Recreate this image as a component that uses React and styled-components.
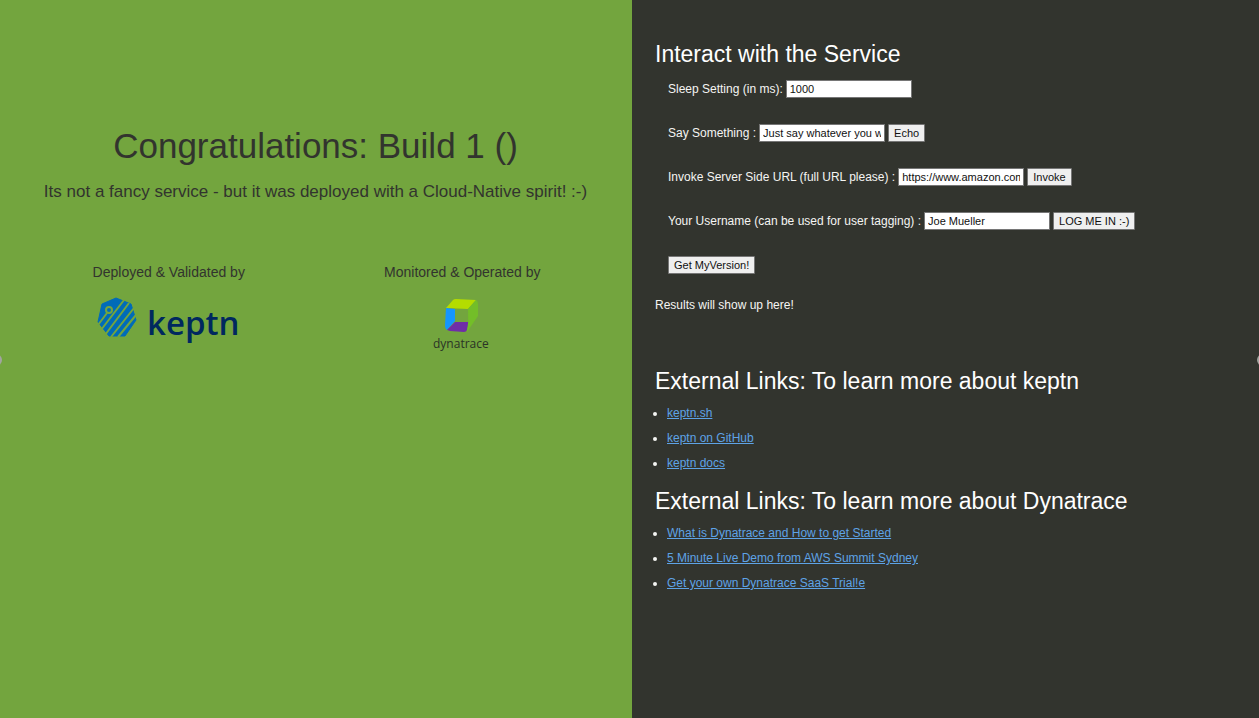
import React from "react";
import styled, { createGlobalStyle } from "styled-components";

const GlobalStyle = createGlobalStyle`
  * { box-sizing: border-box; }
  body {
    margin: 0;
    font-family: "Liberation Sans", Arial, sans-serif;
    font-size: 12px;
    line-height: 16px;
    overflow-x: hidden;
  }
`;

const Page = styled.div`
  position: relative;
  display: grid;
  grid-template-columns: 632fr 627fr;
  min-height: 100vh;
  overflow: hidden;
`;

const Welcome = styled.section`
  background: #73a53e;
  color: #32342e;
  text-align: center;
  padding: 124px 23px 24px 22px;
`;

const Title = styled.h1`
  margin: 0 0 14px;
  font-size: 35px;
  line-height: 44px;
  font-weight: 400;
`;

const Tagline = styled.p`
  margin: 0;
  font-size: 17px;
  line-height: 20px;
`;

const Partners = styled.div`
  display: grid;
  grid-template-columns: 1fr 1fr;
  margin-top: 60px;
`;

const Partner = styled.figure`
  margin: 0;
  display: flex;
  flex-direction: column;
  align-items: center;
  gap: 15px;
`;

const PartnerLabel = styled.figcaption`
  font-size: 14px;
  line-height: 20px;
`;

const Service = styled.section`
  background: #32342e;
  color: #f5f5f3;
  padding: 40px 23px 24px;
`;

const Heading = styled.h2`
  margin: 0;
  font-size: 23px;
  line-height: 28px;
  font-weight: 400;
  color: #ffffff;
`;

const Controls = styled.form`
  display: flex;
  flex-direction: column;
  gap: 26px;
  padding: 12px 13px 0;
`;

const Row = styled.div`
  display: flex;
  align-items: center;
  gap: 3px;
  height: 18px;
`;

const Field = styled.input`
  width: 126px;
  height: 18px;
  padding: 0 3px;
  border: 1px solid #767676;
  background: #ffffff;
  color: #111111;
  font: inherit;
  font-size: 11px;
`;

const Button = styled.button`
  height: 18px;
  padding: 0 5px;
  border: 1px solid #767676;
  border-radius: 1px;
  background: #efefef;
  color: #111111;
  font: inherit;
  font-size: 11px;
  line-height: 16px;
`;

const Results = styled.p`
  margin: 23px 0 54px;
`;

const Links = styled.ul`
  margin: 0;
  padding: 10px 0 16px 12px;
  display: grid;
  gap: 9px;
`;

const Link = styled.a`
  color: #5ea3e6;
  text-decoration: underline;
`;

const Handle = styled.button`
  position: absolute;
  top: calc(50% - 5px);
  ${({ $side }) => $side}: -10px;
  width: 12px;
  height: 12px;
  padding: 0;
  border: 0;
  border-radius: 50%;
  background: #a2a4a0;
`;

const KeptnLogo = () => (
  <svg width="144" height="48" viewBox="0 0 144 48" role="img" aria-label="keptn">
    <path d="M19 1L34 7L39 23L28 39H12L1 25L5 7Z" fill="#006bb8" stroke="#006bb8" strokeLinejoin="round" />
    <g stroke="#73a53e" strokeWidth="2" fill="none">
      <path d="M10 16L1 28M27 3L4 33M32 6L8 38M37 11L14 40M39 18L21 40" />
      <circle cx="12" cy="13" r="3" />
    </g>
    <text x="50" y="38" fontFamily="Open Sans, sans-serif" fontWeight="600" fontSize="33" fill="#00285f">keptn</text>
  </svg>
);

const DynatraceLogo = () => (
  <svg width="58" height="54" viewBox="0 0 58 54" role="img" aria-label="dynatrace">
    <path d="M13 11L20 3Q21 2 23 2L43 3L35 12Z" fill="#b4dc00" />
    <path d="M13 11L22 12V24L14 33Q12 32 12 28Z" fill="#1496ff" />
    <path d="M14 33L22 25H36L34 33Q33 35 31 35L17 34Z" fill="#6f2da8" />
    <path d="M35 12L43 3Q45 4 45 7V19L34 35Q36 24 35 12Z" fill="#73be28" />
    <text x="0" y="51" fontFamily="Open Sans, sans-serif" fontWeight="400" fontSize="12" fill="#2a3326">dynatrace</text>
  </svg>
);

const fields = [
  { id: "sleep", label: "Sleep Setting (in ms):", value: "1000" },
  { id: "say", label: "Say Something :", value: "Just say whatever you want", action: "Echo" },
  { id: "url", label: "Invoke Server Side URL (full URL please) :", value: "https://www.amazon.com", action: "Invoke" },
  { id: "user", label: "Your Username (can be used for user tagging) :", value: "Joe Mueller", action: "LOG ME IN :-)" },
];

const LinkList = ({ items }) => (
  <Links>
    {items.map((item) => (
      <li key={item}><Link href="#">{item}</Link></li>
    ))}
  </Links>
);

export default function App() {
  return (
    <>
      <GlobalStyle />
      <Page>
        <Welcome>
          <Title>Congratulations: Build 1 ()</Title>
          <Tagline>Its not a fancy service - but it was deployed with a Cloud-Native spirit! :-)</Tagline>
          <Partners>
            <Partner>
              <PartnerLabel>Deployed &amp; Validated by</PartnerLabel>
              <KeptnLogo />
            </Partner>
            <Partner>
              <PartnerLabel>Monitored &amp; Operated by</PartnerLabel>
              <DynatraceLogo />
            </Partner>
          </Partners>
        </Welcome>
        <Service>
          <Heading>Interact with the Service</Heading>
          <Controls onSubmit={(e) => e.preventDefault()}>
            {fields.map(({ id, label, value, action }) => (
              <Row key={id}>
                <label htmlFor={id}>{label}</label>
                <Field id={id} type="text" defaultValue={value} />
                {action && <Button type="button">{action}</Button>}
              </Row>
            ))}
            <Row>
              <Button type="button">Get MyVersion!</Button>
            </Row>
          </Controls>
          <Results>Results will show up here!</Results>
          <Heading>External Links: To learn more about keptn</Heading>
          <LinkList items={["keptn.sh", "keptn on GitHub", "keptn docs"]} />
          <Heading>External Links: To learn more about Dynatrace</Heading>
          <LinkList
            items={[
              "What is Dynatrace and How to get Started",
              "5 Minute Live Demo from AWS Summit Sydney",
              "Get your own Dynatrace SaaS Trial!e",
            ]}
          />
        </Service>
        <Handle $side="left" type="button" aria-label="Previous" />
        <Handle $side="right" type="button" aria-label="Next" />
      </Page>
    </>
  );
}
